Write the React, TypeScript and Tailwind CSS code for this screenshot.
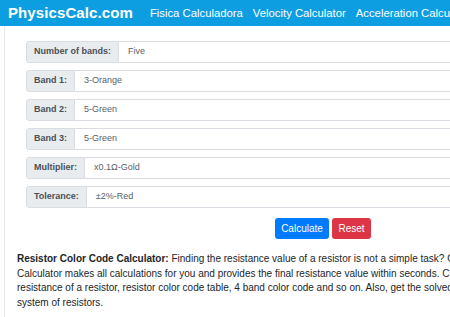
import React from "react";

const rows: [string, string][] = [
  ["Number of bands:", "Five"],
  ["Band 1:", "3-Orange"],
  ["Band 2:", "5-Green"],
  ["Band 3:", "5-Green"],
  ["Multiplier:", "x0.1Ω-Gold"],
  ["Tolerance:", "±2%-Red"],
];

export default function App() {
  return (
    <div
      className="w-[450px] h-[317px] overflow-hidden bg-white"
      style={{ fontFamily: '"Liberation Sans", Arial, sans-serif' }}
    >
      <header className="h-[26px] bg-[#0d9ee2] flex items-center pl-[8px] whitespace-nowrap text-white">
        <span className="text-[15px] font-bold tracking-[0.1px]">PhysicsCalc.com</span>
        <nav className="flex gap-[10px] ml-[17px] text-[11.3px]">
          <span>Fisica Calculadora</span>
          <span>Velocity Calculator</span>
          <span>Acceleration Calculator</span>
        </nav>
      </header>
      <main className="ml-[4px] border-l border-[#e8e8e8] h-[291px] pt-[15px]">
        <div className="ml-[21px] w-[594px] flex flex-col gap-[7px]">
          {rows.map(([l, v]) => (
            <div key={l} className="flex h-[22px] text-[9px] text-[#495057]">
              <div className="bg-[#e9ecef] border border-[#d9dde1] rounded-l-[3px] px-[7px] flex items-center font-bold whitespace-nowrap">
                {l}
              </div>
              <div className="flex-1 border border-l-0 border-[#d9dde1] flex items-center pl-[9px] text-[#5a6168]">
                {v}
              </div>
            </div>
          ))}
          <div className="flex justify-center gap-[3px] mt-[3px]">
            <button className="h-[21px] w-[54px] rounded-[3px] bg-[#007bff] text-white text-[10px]">
              Calculate
            </button>
            <button className="h-[21px] w-[39px] rounded-[3px] bg-[#dc3545] text-white text-[10px]">
              Reset
            </button>
          </div>
        </div>
        <div className="ml-[12px] mt-[13px] text-[10px] leading-[14.7px] text-[#212529] whitespace-nowrap">
          <div>
            <b>Resistor Color Code Calculator:</b> Finding the resistance value of a resistor is not a simple task? Our Resistor Color Code
          </div>
          <div>Calculator makes all calculations for you and provides the final resistance value within seconds. Check</div>
          <div>resistance of a resistor, resistor color code table, 4 band color code and so on. Also, get the solved</div>
          <div>system of resistors.</div>
        </div>
      </main>
    </div>
  );
}
